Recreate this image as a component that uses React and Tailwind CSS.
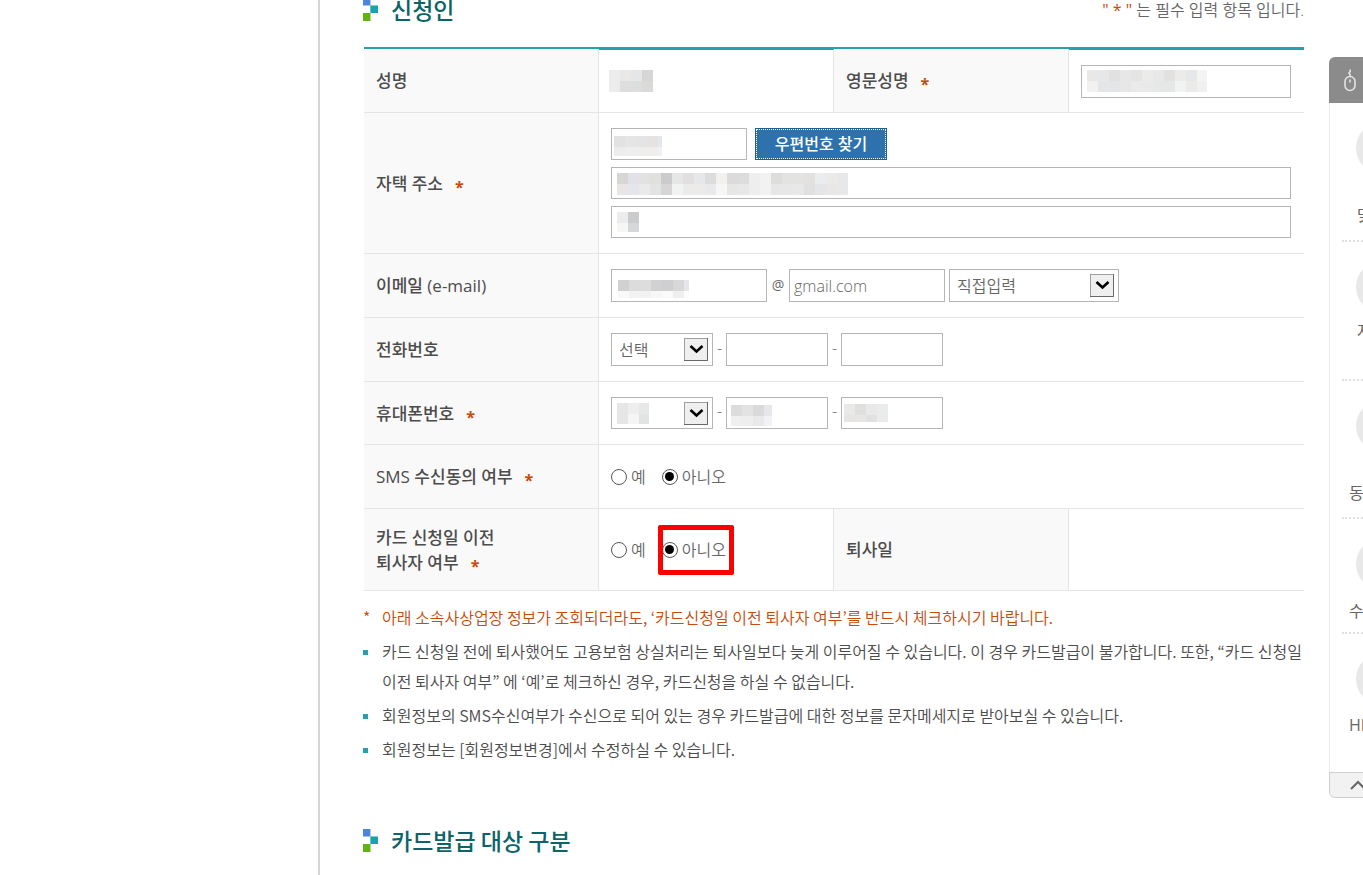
import { useState } from 'react';

const FIELD = 'border border-[#b5b5b5] bg-white px-1 text-base text-[#666] outline-none';

// blocks are 11px, w and h trim the last column and row
const MASKS = {
  name: {
    w: 44,
    h: 22,
    rows: [['#ececec', '#e9e8e7', '#e4e6e8', '#d6d6d6'], ['#ececec', '#dededf', '#dcdedd', '#dadad8']],
  },
  english: {
    w: 120,
    h: 22,
    rows: [
      ['#e9e8e7', '#e6e7e9', '#e1e1e2', '#e7e7e7', '#e5e3e4', '#ebebe9', '#e8e8e8', '#e1e1e1', '#ecebe9', '#e6e7ea', '#f4f4f4'],
      ['#f3f1f0', '#e5e6e8', '#e3e5e7', '#e7e7e7', '#eaeaea', '#e9e9e9', '#e6e8e8', '#e5e6e6', '#f1f3f3', '#eaeae8', '#eff0f0'],
    ],
  },
  zip: {
    w: 48,
    h: 20,
    rows: [['#e2e2e2', '#e5e5e5', '#e2e4e6', '#e6e2e1', '#e2e8ee'], ['#ececec', '#eeeeee', '#eeeeed', '#f0eeed', '#eef2f6']],
  },
  address: {
    w: 231,
    h: 22,
    rows: [
      ['#d8d6d2', '#e1e2e8', '#e2e2e2', '#e2e0dc', '#cbcbce', '#e5e7e6', '#e2e0df', '#e5e7ea', '#dcdcdd', '#f3f1ee', '#dbdbdb', '#dcdcdc', '#eeeeee', '#f2f2f2', '#dddddb', '#e3e3e3', '#e3e3e2', '#e2e1df', '#eaedf0', '#ebeae9', '#e7e8ea'],
      ['#e8e5e4', '#e5e6ec', '#eaeaea', '#e2e3e3', '#d8d5d7', '#f1f3f3', '#ebebeb', '#ecebe9', '#e9e9eb', '#f6f6f6', '#e6e6e4', '#e8e8e8', '#eeeeee', '#f2f2f2', '#e6e6e6', '#e7e7e7', '#e8e8e8', '#e0e0e1', '#e4e5e8', '#e9e7e5', '#e7e8ea'],
    ],
  },
  detail: { w: 22, h: 20, rows: [['#ececec', '#cacbcd'], ['#f6f6f5', '#d5d7d9']] },
  email: {
    w: 71,
    h: 18,
    rows: [
      ['#d2d0d2', '#dcdcdc', '#dcdddc', '#d1d0d3', '#cfced1', '#d8d8d8', '#e5e5ea'],
      ['#f9f9f9', '#f2f2f2', '#f2f2f2', '#f7f7f8', '#fafafa', '#efefef', '#fbfcfe'],
    ],
  },
  carrier: { w: 32, h: 21, rows: [['#e6e6e6', '#eeeeee', '#e6e7e8'], ['#e6e6e6', '#f5f5f5', '#e2e4e4']] },
  middle: { w: 41, h: 21, rows: [['#dcdcdd', '#e3e3e3', '#dadadb', '#e6e7ea'], ['#efefef', '#eeeeee', '#e9e9e9', '#f1f2f5']] },
  last: { w: 44, h: 18, rows: [['#e9e9e8', '#dfdfde', '#e9e9ea', '#eaecec'], ['#e6e5e3', '#e7e6e5', '#e1e1e2', '#eaecec']] },
};

function Mask({ name, className }) {
  const { w, h, rows } = MASKS[name];
  return (
    <svg width={w} height={h} className={`pointer-events-none ${className}`} shapeRendering="crispEdges" aria-hidden="true">
      {rows.map((row, y) =>
        row.map((fill, x) => <rect key={`${x}-${y}`} x={x * 11} y={y * 11} width="11" height="11" fill={fill} />)
      )}
    </svg>
  );
}

function Field({ label, className, mask, maskClass = 'absolute left-[6px] top-[6px]', defaultValue }) {
  return (
    <span className={`relative block ${className}`}>
      <input type="text" aria-label={label} defaultValue={defaultValue} className={`block h-full w-full ${FIELD}`} />
      {mask && <Mask name={mask} className={maskClass} />}
    </span>
  );
}

function Select({ label, className, options, mask }) {
  return (
    <span className={`relative block ${className}`}>
      <select aria-label={label} className={`block h-full w-full appearance-none pl-[7px] ${FIELD}`}>
        {options.map((o) => <option key={o}>{o}</option>)}
      </select>
      {mask && <Mask name={mask} className="absolute left-[6px] top-[6px]" />}
      <svg width="24" height="23" viewBox="0 0 24 23" className="pointer-events-none absolute right-[5px] top-[5px]" aria-hidden="true">
        <rect x="0.5" y="0.5" width="23" height="22" fill="#efefef" stroke="#a0a0a0" />
        <path d="M0 22.5H23.5V0" fill="none" stroke="#696969" />
        <path d="M6.5 8L12.5 13.500L18.500 8" fill="none" stroke="#000" strokeWidth="2.6" />
      </svg>
    </span>
  );
}

function Dash() {
  return <span className="w-[13px] pb-1 text-center">-</span>;
}

function YesNo({ name, label, highlight }) {
  const [value, setValue] = useState('아니오');
  return (
    <div role="radiogroup" aria-label={label} className="flex gap-4">
      {['예', '아니오'].map((text) => (
        <label key={text} className="relative flex h-6 items-center gap-1">
          <input
            type="radio"
            name={name}
            checked={value === text}
            onChange={() => setValue(text)}
            className="grid size-4 appearance-none place-items-center rounded-full border border-[#555] bg-white before:size-[9px] before:rounded-full before:content-[''] checked:before:bg-black"
          />
          {text}
          {highlight === text && (
            <span className="pointer-events-none absolute -left-1 -top-[13px] h-[50px] w-[76px] rounded-xs border-[5px] border-[#f00]" />
          )}
        </label>
      ))}
    </div>
  );
}

function Required() {
  return <span className="ml-3 align-[-3px] text-base leading-none font-bold text-[#c84b0a]">*</span>;
}

function Th({ children, required }) {
  return (
    <th scope="row" className="w-1/4 border-b border-r border-[#e5e5e5] bg-[#f9f9f9] pl-3 text-left align-middle text-[17px] leading-[25px] font-medium text-[#4c4c4c]">
      {children}
      {required && <Required />}
    </th>
  );
}

function Td({ children, className = '', ...rest }) {
  return (
    <td className={`border-b border-[#e5e5e5] pl-3 pr-[13px] align-middle ${className}`} {...rest}>
      {children}
    </td>
  );
}

function Heading({ children }) {
  return (
    <h2 className="flex h-[19px] items-center gap-[13px] font-['Noto_Sans_CJK_KR',sans-serif] text-[23px] leading-[19px] font-medium text-[#0b6468]">
      <svg width="15" height="23" viewBox="0 0 15 23" className="shrink-0" shapeRendering="crispEdges" aria-hidden="true">
        <rect x="7" width="1" height="8" fill="#b5cbf3" />
        <rect width="7" height="7" fill="#4a86e0" />
        <rect y="7" width="7" height="1" fill="#a9bfe6" />
        <rect x="7" y="7" width="8" height="1" fill="#7fcdd2" />
        <rect x="8" y="8" width="7" height="7" fill="#17a5ad" />
        <rect x="7" y="8" width="1" height="7" fill="#5fc0c5" />
        <rect x="7" y="15" width="1" height="8" fill="#b6da92" />
        <rect y="15" width="7" height="8" fill="#62b212" />
      </svg>
      {children}
    </h2>
  );
}

function Note({ children, alert }) {
  return (
    <li className={`flex gap-[14px] ${alert ? 'text-[#c84b0a]' : 'text-[#4c4c4c]'}`}>
      {alert ? (
        <span className="w-[5px] shrink-0">*</span>
      ) : (
        <span className="mt-[14px] size-[5px] shrink-0 bg-[#26a1a9]" />
      )}
      <span>{children}</span>
    </li>
  );
}

const QUICK = [
  { text: '맞', item: 'h-[139px] border-b-2', label: 'mt-[29px] ml-[15px]' },
  { text: '자', item: 'h-[139px] border-b-2', label: 'mt-[6px] ml-[15px]' },
  { text: '동', item: 'h-[138px] border-b-2', label: 'mt-[29px] ml-[7px]' },
  { text: '수', item: 'h-[115px] border-b-2', label: 'mt-[9px] ml-[7px]' },
  { text: 'HR', item: 'h-[138px]', label: 'mt-[8px] ml-[7px]' },
];

function QuickMenu() {
  return (
    <aside className="w-[34px] shrink-0 overflow-hidden pt-[57px]">
      <div className="w-[106px]">
        <div className="h-[46px] rounded-tl-md bg-[#8b8b8b] pl-[15px] pt-3">
          <svg width="12" height="23" viewBox="0 0 12 23" fill="none" stroke="#e4e4e4" strokeWidth="1.6" aria-hidden="true">
            <rect x="1" y="7.5" width="10" height="14" rx="5" />
            <path d="M6 7.5V5.5L5 4L6.200 2.500V0.500M6 10.500V13.500" />
          </svg>
        </div>
        <ul className="border-l border-[#ececec] pl-3">
          {QUICK.map((q) => (
            <li key={q.text} className={`border-dotted border-[#e0e0e0] pt-[19px] ${q.item}`}>
              <a href="#" className="block">
                <span className="ml-[14px] block size-[52px] rounded-full bg-[#e8e8e8]" />
                <span className={`block text-base leading-6 font-normal ${q.label}`}>{q.text}</span>
              </a>
            </li>
          ))}
        </ul>
        <button type="button" aria-label="위로" className="block h-[26px] w-full rounded-bl-md border border-[#cfcfcf] bg-[#f2f2f2] pl-5">
          <svg width="16" height="10" viewBox="0 0 16 10" fill="none" stroke="#666" strokeWidth="2" aria-hidden="true">
            <path d="M1 9L8 2L15 9" />
          </svg>
        </button>
      </div>
    </aside>
  );
}

export default function App() {
  return (
    <div className="flex h-screen overflow-hidden bg-white font-['Open_Sans','Noto_Sans_CJK_KR',sans-serif] text-base leading-6 font-[350] text-[#666]">
      <div className="w-[318px] shrink-0" />
      <main className="min-w-0 flex-1 border-l-2 border-[#d5d5d5] pl-[43px] pr-[25px]">
        <div className="flex h-[47px] items-start justify-between">
          <Heading>신청인</Heading>
          <p className="leading-5">
            <span className="font-medium text-[#c84b0a]">" * "</span> 는 필수 입력 항목 입니다.
          </p>
        </div>

        <div className="pl-px">
          <table className="w-full table-fixed border-separate border-spacing-0 border-t-2 border-[#26a1a9]">
            <tbody>
              <tr className="h-16">
                <Th>성명</Th>
                <Td className="border-r border-t border-t-[#26a1a9]">
                  <Mask name="name" className="-ml-0.5" />
                </Td>
                <Th required>영문성명</Th>
                <Td className="border-t border-t-[#26a1a9]">
                  <Field label="영문성명" className="h-[33px]" mask="english" maskClass="absolute left-[6px] top-[5px]" />
                </Td>
              </tr>
              <tr className="h-[141px]">
                <Th required>자택 주소</Th>
                <Td colSpan={3}>
                  <div className="flex flex-col gap-[7px]">
                    <div className="flex gap-2">
                      <Field label="우편번호" className="h-8 w-[136px]" mask="zip" maskClass="absolute left-[3px] top-[8px]" />
                      <button type="button" className="h-8 w-[132px] border border-[#1f5f96] bg-[#2d72ad] text-base font-medium text-white outline-1 -outline-offset-2 outline-dotted outline-white">
                        우편번호 찾기
                      </button>
                    </div>
                    <Field label="주소" className="h-8" mask="address" />
                    <Field label="상세주소" className="h-8" mask="detail" />
                  </div>
                </Td>
              </tr>
              <tr className="h-16">
                <Th>이메일 (e-mail)</Th>
                <Td colSpan={3}>
                  <div className="flex items-center">
                    <Field label="이메일 아이디" className="h-[33px] w-[156px]" mask="email" maskClass="absolute left-[7px] top-[11px]" />
                    <span className="w-[22px] pb-0.5 text-center text-sm font-normal">@</span>
                    <Field label="이메일 도메인" className="h-[33px] w-[156px]" defaultValue="gmail.com" />
                    <Select label="도메인 선택" className="ml-1 h-[33px] w-[170px]" options={['직접입력', 'gmail.com', 'naver.com']} />
                  </div>
                </Td>
              </tr>
              <tr className="h-16">
                <Th>전화번호</Th>
                <Td colSpan={3}>
                  <div className="flex items-center">
                    <Select label="지역번호" className="h-[33px] w-[102px]" options={['선택', '02', '031']} />
                    <Dash />
                    <Field label="전화번호 가운데 자리" className="h-[33px] w-[102px]" />
                    <Dash />
                    <Field label="전화번호 끝자리" className="h-[33px] w-[102px]" />
                  </div>
                </Td>
              </tr>
              <tr className="h-[63px]">
                <Th required>휴대폰번호</Th>
                <Td colSpan={3}>
                  <div className="flex items-center">
                    <Select label="휴대폰 앞자리" className="h-8 w-[102px]" options={['']} mask="carrier" />
                    <Dash />
                    <Field label="휴대폰 가운데 자리" className="h-8 w-[102px]" mask="middle" maskClass="absolute left-[5px] top-[8px]" />
                    <Dash />
                    <Field label="휴대폰 끝자리" className="h-8 w-[102px]" mask="last" maskClass="absolute left-[3px] top-[7px]" />
                  </div>
                </Td>
              </tr>
              <tr className="h-16">
                <Th required>SMS 수신동의 여부</Th>
                <Td colSpan={3}>
                  <YesNo name="sms" label="SMS 수신동의 여부" />
                </Td>
              </tr>
              <tr className="h-[82px]">
                <Th required>카드 신청일 이전<br />퇴사자 여부</Th>
                <Td className="border-r">
                  <YesNo name="retired" label="카드 신청일 이전 퇴사자 여부" highlight="아니오" />
                </Td>
                <Th>퇴사일</Th>
                <Td />
              </tr>
            </tbody>
          </table>
        </div>

        <ul className="mt-[11px] flex flex-col gap-1 break-keep font-['Noto_Sans_CJK_KR',sans-serif] leading-[30px]">
          <Note alert>아래 소속사상업장 정보가 조회되더라도, ‘카드신청일 이전 퇴사자 여부’를 반드시 체크하시기 바랍니다.</Note>
          <Note>
            카드 신청일 전에 퇴사했어도 고용보험 상실처리는 퇴사일보다 늦게 이루어질 수 있습니다. 이 경우 카드발급이 불가합니다. 또한, “카드 신청일 이전 퇴사자 여부” 에 ‘예’로 체크하신 경우, 카드신청을 하실 수 없습니다.
          </Note>
          <Note>회원정보의 SMS수신여부가 수신으로 되어 있는 경우 카드발급에 대한 정보를 문자메세지로 받아보실 수 있습니다.</Note>
          <Note>회원정보는 [회원정보변경]에서 수정하실 수 있습니다.</Note>
        </ul>

        <div className="mt-[67px]">
          <Heading>카드발급 대상 구분</Heading>
        </div>
      </main>
      <QuickMenu />
    </div>
  );
}
